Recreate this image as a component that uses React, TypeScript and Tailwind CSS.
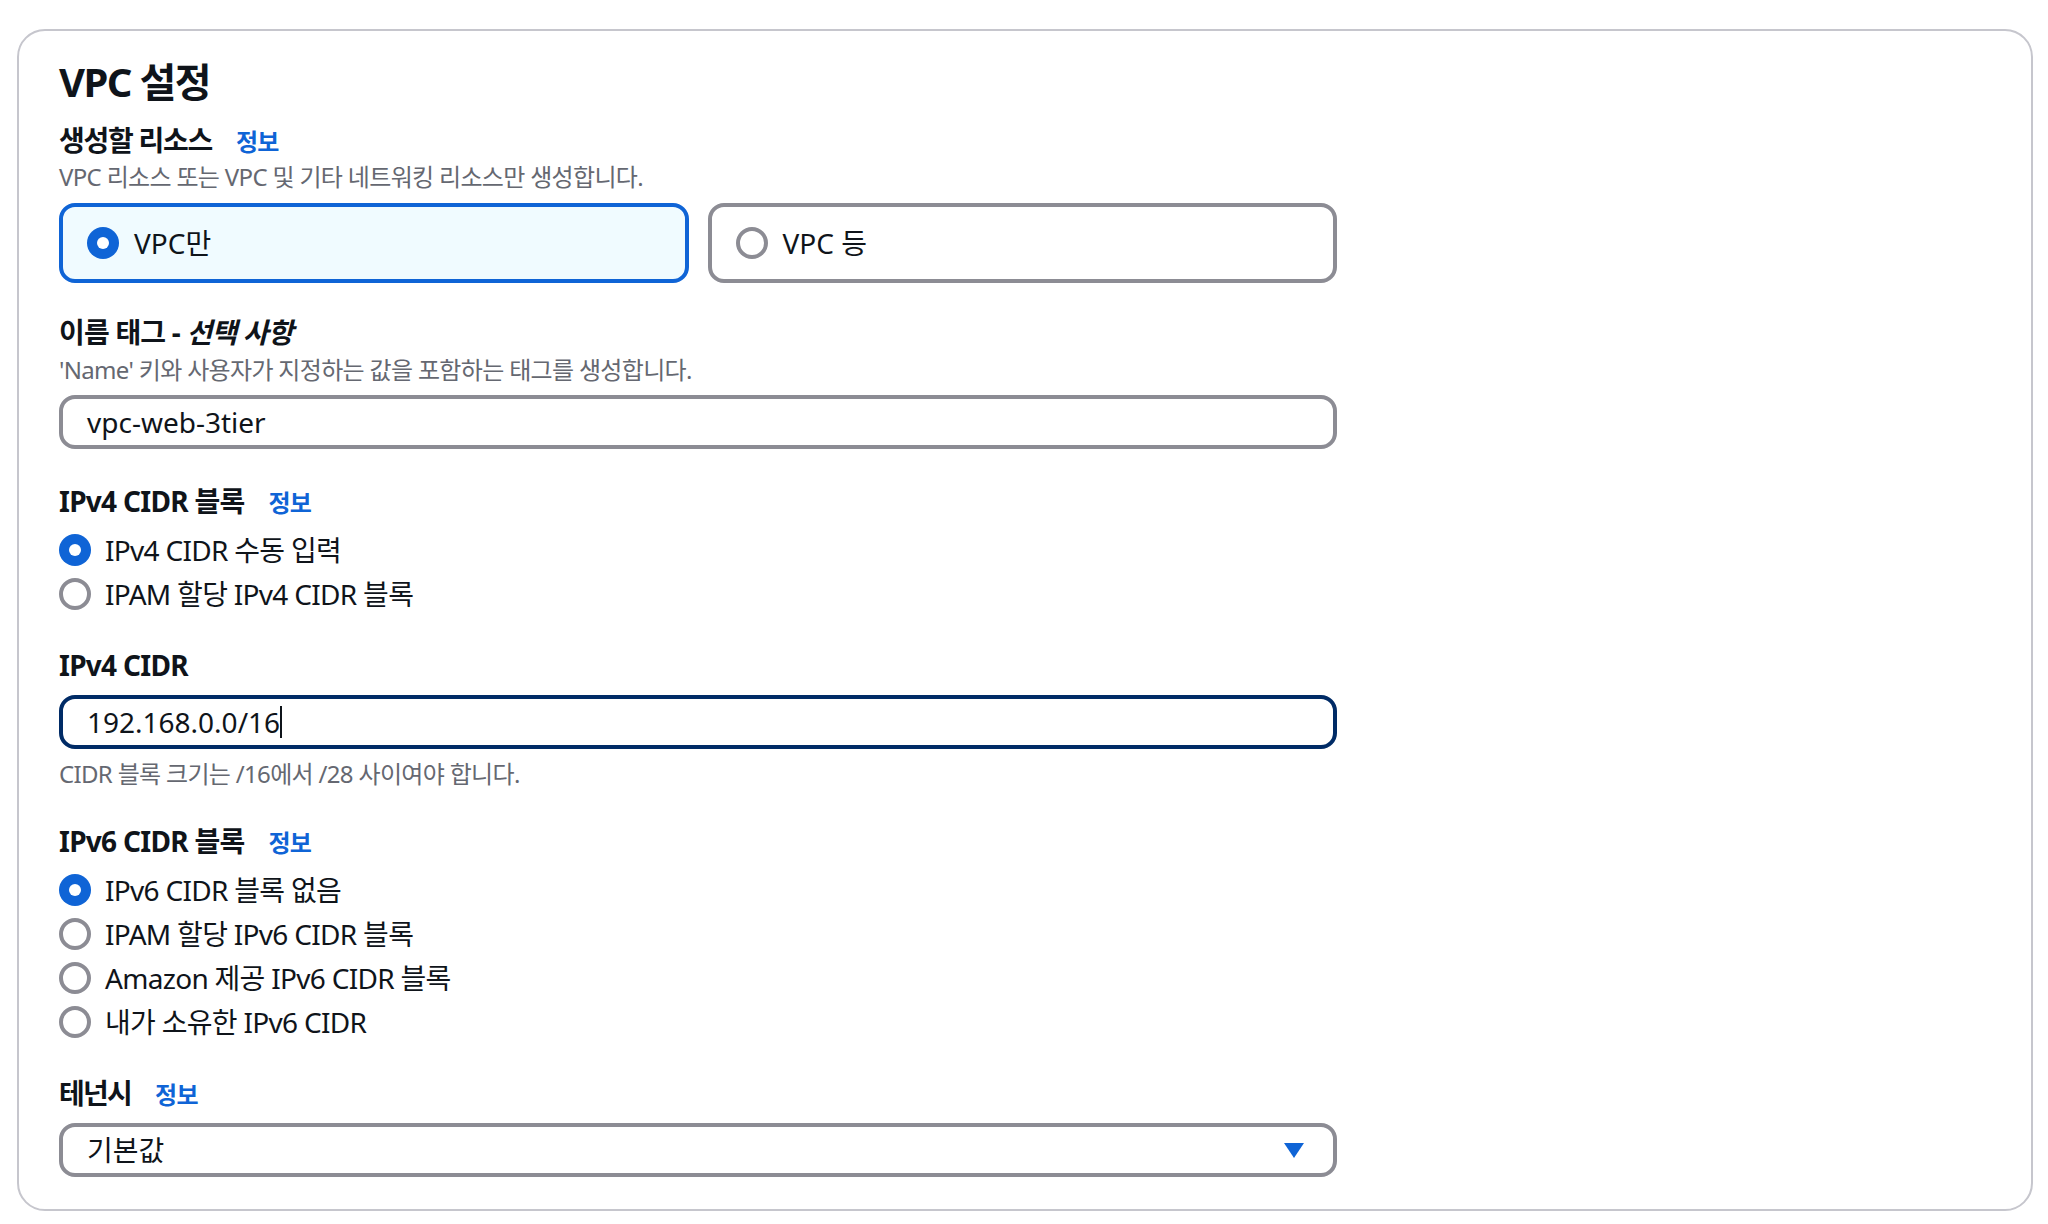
import React from 'react';

const FONT = 'font-["Noto_Sans","Noto_Sans_CJK_KR",sans-serif]';

interface LabelProps {
  children: React.ReactNode;
  info?: boolean;
  className?: string;
}

function FieldLabel({ children, info, className = '' }: LabelProps) {
  return (
    <div className={`flex items-baseline h-[36px] ${className}`}>
      <span className="text-[28px] leading-[36px] font-bold text-[#0f141a]">
        {children}
      </span>
      {info && (
        <a
          href="#"
          className="ml-[24px] text-[24px] leading-[36px] font-bold tracking-[-0.03em] text-[#0f64d6]"
        >
          정보
        </a>
      )}
    </div>
  );
}

function Description({
  children,
  className = '',
}: {
  children: React.ReactNode;
  className?: string;
}) {
  return (
    <p
      className={`text-[24px] leading-[32px] tracking-[-0.028em] text-[#656871] ${className}`}
    >
      {children}
    </p>
  );
}

function RadioDot({ checked }: { checked: boolean }) {
  if (checked) {
    return (
      <span className="flex items-center justify-center w-[32px] h-[32px] shrink-0 rounded-full bg-[#0f64d6]">
        <span className="w-[12px] h-[12px] rounded-full bg-white" />
      </span>
    );
  }
  return (
    <span className="w-[32px] h-[32px] shrink-0 rounded-full border-[4px] border-[#8c8c94] bg-white" />
  );
}

function RadioGroup({ options, value }: { options: string[]; value: number }) {
  return (
    <div className="flex flex-col mt-[9px]">
      {options.map((label, idx) => (
        <label
          key={`radio-${idx}`}
          className="flex items-center gap-[14px] h-[44px] text-[28px] leading-[44px] tracking-[-0.025em] text-[#0f141a]"
        >
          <RadioDot checked={idx === value} />
          <span>{label}</span>
        </label>
      ))}
    </div>
  );
}

function Tile({ label, checked }: { label: string; checked: boolean }) {
  return (
    <div
      className={`flex-1 flex items-center gap-[15px] h-[80px] px-[24px] rounded-[16px] border-[4px] ${
        checked ? 'border-[#0f64d6] bg-[#f0fbff]' : 'border-[#8c8c94] bg-white'
      }`}
    >
      <RadioDot checked={checked} />
      <span className="text-[28px] leading-[36px] text-[#0f141a]">{label}</span>
    </div>
  );
}

function TextInput({
  value,
  focused,
  className = '',
}: {
  value: string;
  focused?: boolean;
  className?: string;
}) {
  return (
    <div
      className={`flex items-center h-[54px] pl-[24px] rounded-[16px] border-[4px] bg-white ${
        focused ? 'border-[#002b66]' : 'border-[#8c8c94]'
      } ${className}`}
    >
      <span className="text-[28px] leading-[36px] text-[#0f141a]">{value}</span>
      {focused && <span className="w-[2px] h-[32px] bg-[#0f141a]" />}
    </div>
  );
}

export default function App() {
  return (
    <div className={`min-h-screen bg-white pt-[29px] pl-[17px] pr-[15px] ${FONT}`}>
      <div className="border-2 border-[#c6c6cd] rounded-[28px] px-[40px] pt-[27px] pb-[32px]">
        <h2 className="text-[40px] leading-[48px] font-bold tracking-[-0.04em] text-[#0f141a]">
          VPC 설정
        </h2>

        <div className="w-[1278px]">
          <FieldLabel info className="mt-[16px] tracking-[-0.08em]">
            생성할 리소스
          </FieldLabel>
          <Description className="mt-[3px]">
            VPC 리소스 또는 VPC 및 기타 네트워킹 리소스만 생성합니다.
          </Description>
          <div className="flex gap-[19px] mt-[10px]">
            <Tile label="VPC만" checked />
            <Tile label="VPC 등" checked={false} />
          </div>

          <FieldLabel className="mt-[31px] tracking-[-0.05em]">
            이름 태그 - <i>선택 사항</i>
          </FieldLabel>
          <Description className="mt-[4px]">
            'Name' 키와 사용자가 지정하는 값을 포함하는 태그를 생성합니다.
          </Description>
          <TextInput value="vpc-web-3tier" className="mt-[9px]" />

          <FieldLabel info className="mt-[34px] tracking-[-0.045em]">
            IPv4 CIDR 블록
          </FieldLabel>
          <RadioGroup
            options={['IPv4 CIDR 수동 입력', 'IPAM 할당 IPv4 CIDR 블록']}
            value={0}
          />

          <FieldLabel className="mt-[31px] tracking-[-0.045em]">IPv4 CIDR</FieldLabel>
          <TextInput value="192.168.0.0/16" focused className="mt-[12px]" />
          <Description className="mt-[9px] tracking-[-0.02em]">
            CIDR 블록 크기는 /16에서 /28 사이여야 합니다.
          </Description>

          <FieldLabel info className="mt-[33px] tracking-[-0.045em]">
            IPv6 CIDR 블록
          </FieldLabel>
          <RadioGroup
            options={[
              'IPv6 CIDR 블록 없음',
              'IPAM 할당 IPv6 CIDR 블록',
              'Amazon 제공 IPv6 CIDR 블록',
              '내가 소유한 IPv6 CIDR',
            ]}
            value={0}
          />

          <FieldLabel info className="mt-[31px] tracking-[-0.11em]">
            테넌시
          </FieldLabel>
          <div className="flex items-center justify-between h-[54px] mt-[12px] pl-[24px] pr-[29px] rounded-[16px] border-[4px] border-[#8c8c94] bg-white">
            <span className="text-[28px] leading-[36px] text-[#0f141a]">기본값</span>
            <svg width="20" height="15" viewBox="0 0 20 15" aria-hidden="true">
              <path d="M0 0 H20 L10 15 Z" fill="#0f64d6" />
            </svg>
          </div>
        </div>
      </div>
    </div>
  );
}
